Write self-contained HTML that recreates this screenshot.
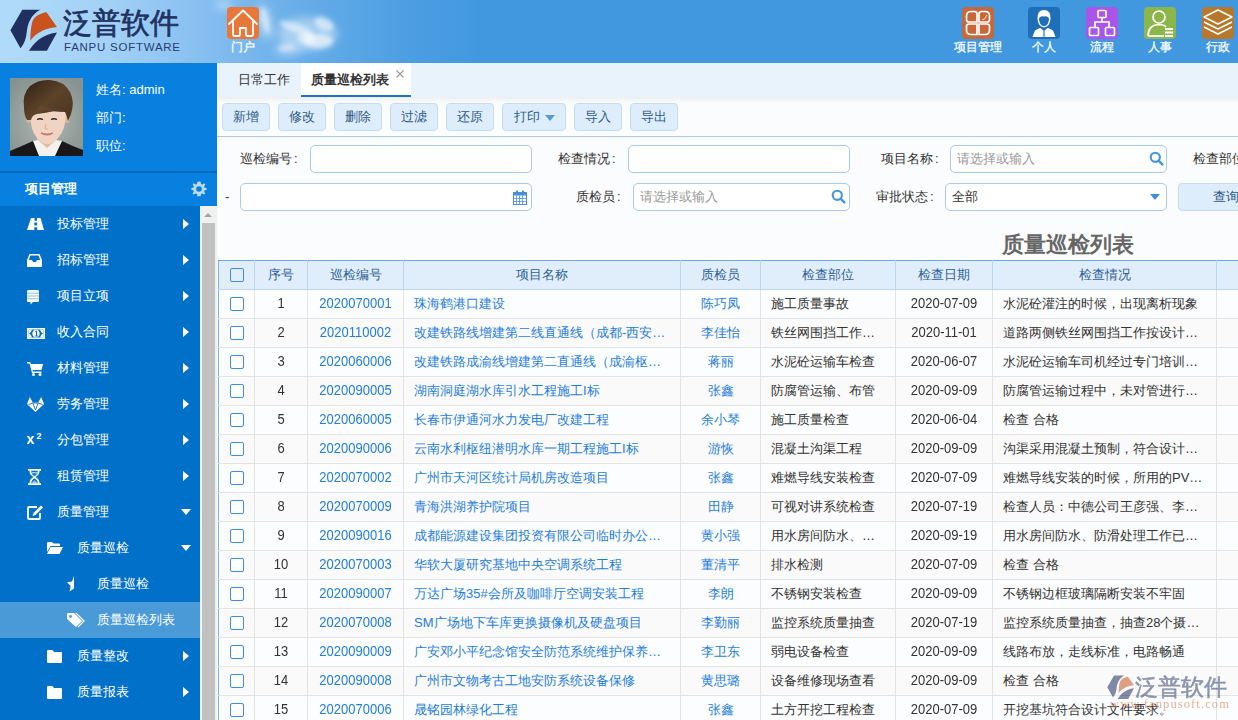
<!DOCTYPE html>
<html><head><meta charset="utf-8">
<style>
*{margin:0;padding:0;box-sizing:border-box}
html,body{width:1238px;height:720px;overflow:hidden;background:#fbfcfd;font-family:"Liberation Sans",sans-serif;font-size:13px;color:#333}
.a{position:absolute}
#hdr{position:absolute;left:0;top:0;width:1238px;height:63px;background:linear-gradient(90deg,#b1dbf9 0px,#a2d1f6 110px,#84bdf0 210px,#62aae7 320px,#4c9ee2 410px,#4298df 480px,#4298df 1238px);overflow:hidden}
.hico{position:absolute;top:7px;width:32px;height:32px;border-radius:4px}
.hlbl{position:absolute;top:38px;color:#fff;font-size:12px;line-height:18px;white-space:nowrap}
#side{position:absolute;left:0;top:63px;width:217px;height:657px;background:#0880e0}
#menu{position:absolute;left:0;top:206px;width:200px;height:514px;background:#0070c8}
.mi{position:absolute;left:0;width:200px;height:36px;color:#fff;font-size:13px;line-height:36px}
.mi .t{position:absolute;top:0;white-space:nowrap}
.mi .ic{position:absolute}
.ar{position:absolute;left:183px;top:13px;width:0;height:0;border-top:5px solid transparent;border-bottom:5px solid transparent;border-left:6px solid #fff}
.dn{position:absolute;left:181px;top:15px;width:0;height:0;border-left:5px solid transparent;border-right:5px solid transparent;border-top:6px solid #fff}
#sb{position:absolute;left:200px;top:206px;width:17px;height:514px;background:#f1f1f1}
#sbth{position:absolute;left:202px;top:223px;width:13px;height:497px;background:#c1c1c1}
#sbup{position:absolute;left:204px;top:213px;width:0;height:0;border-left:4px solid transparent;border-right:4px solid transparent;border-bottom:4px solid #a3a3a3}
#tabbar{position:absolute;left:217px;top:63px;width:1021px;height:34px;background:#e8f3fc}
#tabshadow{position:absolute;left:217px;top:97px;width:1021px;height:6px;background:linear-gradient(#eceeef,#fbfcfd)}
.tab{position:absolute;top:63px;height:34px;line-height:22px;padding-top:6px;font-size:13px;color:#333;white-space:nowrap}
.btn{position:absolute;top:103px;height:28px;background:#deedfb;border:1px solid #c6dcf0;border-radius:4px;color:#2f5a87;font-size:13px;line-height:26px;text-align:center;white-space:nowrap}
#tbline{position:absolute;left:217px;top:136px;width:1021px;height:1px;background:#a9c9e6}
.lbl{position:absolute;font-size:13px;color:#333;line-height:16px;white-space:nowrap}
.inp{position:absolute;height:28px;background:#fff;border:1px solid #a9c9e8;border-radius:5px}
.ph{position:absolute;left:6px;top:5px;color:#999;font-size:13px;line-height:16px;white-space:nowrap}
table{position:absolute;left:218px;top:260px;width:1029px;border-collapse:collapse;table-layout:fixed;font-size:13px}
td,th{height:29px;border:1px solid #e3e3e3;white-space:nowrap;overflow:hidden;padding:0 0 0 10px;font-weight:normal;color:#333}
th{background:#e0eefb;border-color:#bcd6ee;color:#2f6197;text-align:center;padding:0 0 1px 0}
td.c{text-align:center;padding:0}
td.l{color:#1f7ddd}
.cb{display:inline-block;width:14px;height:14px;border:1px solid #4f8fd3;border-radius:2px;background:#fff;vertical-align:middle}

.cb{position:relative;top:-1px}
i.n{font-style:normal;display:inline-block;line-height:16px;transform:scaleY(1.12);transform-origin:50% 75%}
th .cb{top:0;background:transparent}
th{border-top-color:#6aa6e2}
tr>*:first-child{border-left-color:#7ab2e6}
.cb{border-color:#3f8ddd}
tr:nth-child(even) td{background:#fcfdfe}
tr:nth-child(odd) td{background:#fafafa}

</style></head><body>
<div id="hdr">
<svg class="a" style="left:0;top:0" width="200" height="63" viewBox="0 0 200 63">
<path d="M22.3,9.7 L40.4,9.7 C34,13 28.5,19 27,30 C26,40 24,44 20.5,48.3 L10.4,30.3 Z" fill="#1f2f5f"/>
<path d="M46.5,12.2 L57,27 C48,27.5 36,32 30.3,40.7 C30.5,33 31,25 33,20 C36,15 42,13 46.5,12.2 Z" fill="#c9531f"/>
<path d="M57,32.4 L46.9,50.8 L28.8,50.8 C34,43 41,34.5 57,32.4 Z" fill="#1f2f5f"/>
</svg>
<div class="a" style="left:63px;top:4px;font-size:29px;-webkit-text-stroke:0.7px #1f3162;line-height:38px;color:#1f3162;white-space:nowrap;letter-spacing:0px">泛普软件</div>
<div class="a" style="left:64px;top:40px;font-size:11.5px;line-height:14px;color:#2a3d6e;white-space:nowrap;letter-spacing:0.75px">FANPU SOFTWARE</div>
<svg class="a" style="left:200px;top:0" width="160" height="63" viewBox="0 0 160 63">
<defs><filter id="bl" x="-50%" y="-50%" width="200%" height="200%"><feGaussianBlur stdDeviation="2"/></filter><filter id="bl2" x="-50%" y="-50%" width="200%" height="200%"><feGaussianBlur stdDeviation="4.5"/></filter></defs>
<g fill="#fff" filter="url(#bl2)">
<ellipse cx="24" cy="5" rx="9" ry="4" opacity="0.45"/>
<ellipse cx="65" cy="22" rx="7" ry="18" opacity="0.4" transform="rotate(-12 65 22)"/>
<ellipse cx="108" cy="34" rx="30" ry="17" opacity="0.4"/>
<ellipse cx="88" cy="50" rx="14" ry="6" opacity="0.35"/>
</g>
<g fill="#fff" filter="url(#bl)">
<ellipse cx="65" cy="20" rx="3.5" ry="13" opacity="0.45" transform="rotate(-12 65 20)"/>
<ellipse cx="96" cy="28" rx="18" ry="4.5" opacity="0.5" transform="rotate(20 96 28)"/>
<ellipse cx="124" cy="24" rx="10" ry="6" opacity="0.55" transform="rotate(25 124 24)"/>
<ellipse cx="118" cy="41" rx="15" ry="7" opacity="0.6"/>
<ellipse cx="106" cy="38" rx="9" ry="6" opacity="0.5"/>
<ellipse cx="86" cy="48" rx="8" ry="3.5" opacity="0.4"/>
</g>
</svg>
<div class="hico" style="left:227px;background:#e8783a"></div>
<svg class="a" style="left:227px;top:7px" width="32" height="32" viewBox="0 0 32 32" fill="none" stroke="#fff" stroke-width="1.8" stroke-linejoin="round" stroke-linecap="round">
<path d="M2,17 L16,3.5 L30,17"/>
<path d="M6,13.5 V27.5 Q6,29 7.5,29 H11.5 Q13,29 13,27.5 V21 H19 V27.5 Q19,29 20.5,29 H24.5 Q26,29 26,27.5 V13.5"/>
</svg>
<div class="hlbl" style="-webkit-text-stroke:0.25px #fff;left:231px">门户</div>
<div class="hico" style="left:962px;background:#c8673a"></div>
<svg class="a" style="left:962px;top:7px" width="32" height="32" viewBox="0 0 32 32" fill="none" stroke="#fff" stroke-width="1.7">
<path d="M9,4.5 H12.5 Q15,4.5 15,7 V15 H7 Q4.5,15 4.5,12.5 V9 Q4.5,4.5 9,4.5 Z"/>
<path d="M17,15 V7 Q17,4.5 19.5,4.5 H23 Q27.5,4.5 27.5,9 V12.5 Q27.5,15 25,15 Z"/>
<path d="M4.5,19.5 Q4.5,17 7,17 H15 V27.5 H9 Q4.5,27.5 4.5,23 Z"/>
<path d="M17,17 H25 Q27.5,17 27.5,19.5 V23 Q27.5,27.5 23,27.5 H17 Z"/>
<path d="M20,12.5 Q24,12.5 24.5,8" stroke-width="0.8"/>
</svg>
<div class="hlbl" style="-webkit-text-stroke:0.25px #fff;left:954px">项目管理</div>
<div class="hico" style="left:1028px;background:#1f6fb8"></div>
<svg class="a" style="left:1028px;top:7px" width="32" height="32" viewBox="0 0 32 32">
<path d="M9.5,12 Q9,3 16,3 Q23,3 22.5,12 Q22,19.5 16,20.5 Q10,19.5 9.5,12 Z" fill="#fff"/>
<path d="M11,11 Q13,8.5 16,9.5 Q19,8.5 21,11 Q21,18.5 16,19.3 Q11,18.5 11,11 Z" fill="#1f6fb8"/>
<path d="M4.5,30 L6.5,24.5 Q8,22 12.5,21 L15.3,23.5 L14.8,30 Z M27.5,30 L25.5,24.5 Q24,22 19.5,21 L16.7,23.5 L17.2,30 Z" fill="#fff"/>
<path d="M15.5,23.5 H16.5 L17,30 H15 Z" fill="#fff" opacity="0.5"/>
</svg>
<div class="hlbl" style="-webkit-text-stroke:0.25px #fff;left:1032px">个人</div>
<div class="hico" style="left:1086px;background:#a855e8"></div>
<svg class="a" style="left:1086px;top:7px" width="32" height="32" viewBox="0 0 32 32" fill="none" stroke="#fff" stroke-width="1.7">
<rect x="12" y="3.5" width="8" height="7" rx="1"/>
<path d="M16,10.5 V15 M9,20.5 V15 H23 V20.5"/>
<rect x="3.5" y="20.5" width="9" height="8" rx="1"/>
<rect x="19.5" y="20.5" width="9" height="8" rx="1"/>
</svg>
<div class="hlbl" style="-webkit-text-stroke:0.25px #fff;left:1090px">流程</div>
<div class="hico" style="left:1144px;background:#8ab64a"></div>
<svg class="a" style="left:1144px;top:7px" width="32" height="32" viewBox="0 0 32 32" fill="none" stroke="#fff" stroke-width="1.7">
<circle cx="15" cy="10" r="6"/>
<path d="M4,29 Q4,18 15,17.5 Q20,17.5 22,20"/>
<path d="M4,29 H20"/>
<path d="M21,22 H29 M21,25.5 H29 M21,29 H29" stroke-width="1.8"/>
</svg>
<div class="hlbl" style="-webkit-text-stroke:0.25px #fff;left:1148px">人事</div>
<div class="hico" style="left:1202px;background:#b8782c"></div>
<svg class="a" style="left:1202px;top:7px" width="32" height="32" viewBox="0 0 32 32" fill="none" stroke="#fff" stroke-width="1.5" stroke-linejoin="round">
<path d="M2,10 L16,3 L30,10 L16,17 Z"/>
<path d="M2,15 L16,22 L30,15"/>
<path d="M2,20 L16,27 L30,20"/>
</svg>
<div class="hlbl" style="-webkit-text-stroke:0.25px #fff;left:1206px">行政</div>

</div>
<div id="side"></div>
<svg class="a" style="left:10px;top:78px" width="73" height="78" viewBox="0 0 73 78">
<defs>
<radialGradient id="pbg" cx="50%" cy="55%" r="65%"><stop offset="0" stop-color="#b0b9b6"/><stop offset="1" stop-color="#86928f"/></radialGradient>
<linearGradient id="hair" x1="0" y1="0" x2="1" y2="1"><stop offset="0" stop-color="#2e2216"/><stop offset="0.5" stop-color="#5c4229"/><stop offset="1" stop-color="#4a3520"/></linearGradient>
</defs>
<rect width="73" height="78" fill="url(#pbg)"/>
<path d="M27,58 L47,58 L47,70 L27,70 Z" fill="#e2bba5"/>
<path d="M0,78 L0,73 Q12,68 23,63 L36,76 L52,63 Q62,68 73,72 L73,78 Z" fill="#1a1718"/>
<path d="M23,63 L29,78 L45,78 L52,63 L46,62 L37,70 L28,62 Z" fill="#f4f1ee"/>
<ellipse cx="18.5" cy="41" rx="2.5" ry="4" fill="#deb49c"/>
<ellipse cx="57" cy="41" rx="2.5" ry="4" fill="#deb49c"/>
<path d="M20,34 Q20,52 27,60 Q32,66 37,66 Q43,66 48,60 Q56,52 56,34 Z" fill="#f0d3c0"/>
<path d="M14,30 Q12,16 20,8 Q29,1 40,2 Q54,3 60,14 Q65,24 61,36 L58,43 Q57,38 55,34 Q50,34 44,33 Q36,35 27,36 Q22,37 21,42 L17,42 Q14,37 14,30 Z" fill="url(#hair)"/>
<path d="M25,36 Q33,30 44,33 Q37,28 30,28 Z" fill="#6a4c30" opacity="0.6"/>
<path d="M27,41.5 Q30,40 33,41.5" stroke="#2a2828" stroke-width="1.3" fill="none"/>
<path d="M41,41.5 Q44,40 47,41.5" stroke="#2a2828" stroke-width="1.3" fill="none"/>
<path d="M36,46 L35,51 L38,51" stroke="#d4a890" stroke-width="0.8" fill="none"/>
<path d="M31,55 Q37,59 43,55 Q37,57 31,55 Z" fill="#b86a68" stroke="#c47a72" stroke-width="1.2"/>
</svg>
<div class="a" style="left:96px;top:82px;color:#fff;font-size:13px;line-height:16px">姓名: admin</div>
<div class="a" style="left:96px;top:110px;color:#fff;font-size:13px;line-height:16px">部门:</div>
<div class="a" style="left:96px;top:137.5px;color:#fff;font-size:13px;line-height:16px">职位:</div>
<div class="a" style="left:0;top:171px;width:217px;height:2px;background:#0668b8"></div>
<div class="a" style="left:25px;top:181px;color:#fff;font-size:13px;font-weight:bold;line-height:16px">项目管理</div>
<svg class="a" style="left:191px;top:181px" width="16" height="16" viewBox="0 0 16 16">
<g fill="#b9d9f6">
<path d="M8,0.5 L9.6,0.7 L10,2.9 L11.4,3.5 L13.2,2.2 L14.3,3.6 L13.1,5.4 L13.6,6.7 L15.6,7.1 L15.6,8.9 L13.6,9.3 L13.1,10.6 L14.3,12.4 L13,13.6 L11.3,12.4 L10,13 L9.6,15.3 L6.4,15.3 L6,13 L4.6,12.4 L2.8,13.6 L1.6,12.4 L2.8,10.6 L2.3,9.3 L0.4,8.9 L0.4,7.1 L2.3,6.7 L2.8,5.4 L1.7,3.6 L2.8,2.3 L4.6,3.5 L6,2.9 L6.4,0.7 Z"/>
</g>
<circle cx="8" cy="8" r="2.8" fill="#0880e0"/>
</svg>
<div id="menu"></div>
<div class="mi" style="top:206px"><svg class="ic" style="left:27px;top:12px" width="17" height="12" viewBox="0 0 17 12"><path d="M4,0 H13.6 L17,12 H0 Z" fill="#fff"/><path d="M7.5,0 H10 V2.8 H7.5 Z M7.4,4.4 H10.1 V7.5 H7.4 Z M7.3,9.2 H10.2 V12 H7.3 Z" fill="#0070c8"/></svg><span class="t" style="left:57px">投标管理</span><span class="ar"></span></div>
<div class="mi" style="top:242px"><svg class="ic" style="left:27px;top:12px" width="15" height="13" viewBox="0 0 15 13"><path d="M2.5,0 H12.5 L15,6 V13 H0 V6 Z M3.5,1.5 L1.8,6 H5 L6,8 H9 L10,6 H13.2 L11.5,1.5 Z" fill="#fff" fill-rule="evenodd"/></svg><span class="t" style="left:57px">招标管理</span><span class="ar"></span></div>
<div class="mi" style="top:278px"><svg class="ic" style="left:27px;top:12px" width="12" height="15" viewBox="0 0 12 15"><path d="M1.5,0 H10.5 Q12,0 12,1.5 V10.5 Q12,12 10.5,12 H6 L3.5,14.5 L3.5,12 H1.5 Q0,12 0,10.5 V1.5 Q0,0 1.5,0 Z" fill="#fff"/><path d="M0,3.2 H12 M0,6 H12 M0,8.8 H12" stroke="#7fb4e6" stroke-width="0.9"/></svg><span class="t" style="left:57px">项目立项</span><span class="ar"></span></div>
<div class="mi" style="top:314px"><svg class="ic" style="left:27px;top:14px" width="18" height="11" viewBox="0 0 18 11"><path d="M0,0 H18 V11 H0 Z M1.5,1.5 V9.5 H16.5 V1.5 Z" fill="#fff" fill-rule="evenodd"/><path d="M1.5,1.5 H5 Q3.5,5.5 1.5,5.5 Z M16.5,1.5 H13 Q14.5,5.5 16.5,5.5 Z M1.5,9.5 H5 Q3.5,5.5 1.5,5.5 Z M16.5,9.5 H13 Q14.5,5.5 16.5,5.5 Z" fill="#fff"/><ellipse cx="9" cy="5.5" rx="3.6" ry="3.8" fill="#fff"/><path d="M8.3,3.6 L9.5,3 V8 M8.2,8 H10.8" stroke="#0070c8" stroke-width="1" fill="none"/></svg><span class="t" style="left:57px">收入合同</span><span class="ar"></span></div>
<div class="mi" style="top:350px"><svg class="ic" style="left:27px;top:12px" width="16" height="14" viewBox="0 0 16 14"><path d="M0,0 H3 L4,2 H16 L14.5,8 H5.5 L6,9.5 H14.5 V11 H5 L2.5,1.5 H0 Z" fill="#fff"/><circle cx="6.5" cy="12.5" r="1.5" fill="#fff"/><circle cx="13" cy="12.5" r="1.5" fill="#fff"/></svg><span class="t" style="left:57px">材料管理</span><span class="ar"></span></div>
<div class="mi" style="top:386px"><svg class="ic" style="left:27px;top:11px" width="17" height="15" viewBox="0 0 17 15"><path d="M0,7 L2.8,0 L5.8,5.5 H11.2 L14.2,0 L17,7 L8.5,15 Z" fill="#fff"/><path d="M1.5,7.5 L5.8,6 L8.5,13 M15.5,7.5 L11.2,6 L8.5,13 M5.8,6 H11.2" stroke="#0070c8" stroke-width="0.9" fill="none"/></svg><span class="t" style="left:57px">劳务管理</span><span class="ar"></span></div>
<div class="mi" style="top:422px"><svg class="ic" style="left:27px;top:9px" width="18" height="15" viewBox="0 0 18 15"><text x="-0.5" y="13" font-family="Liberation Sans" font-weight="bold" font-size="14" fill="#fff">x</text><text x="9.5" y="8" font-family="Liberation Sans" font-weight="bold" font-size="9" fill="#fff">2</text></svg><span class="t" style="left:57px">分包管理</span><span class="ar"></span></div>
<div class="mi" style="top:458px"><svg class="ic" style="left:28px;top:11px" width="13" height="16" viewBox="0 0 13 16"><path d="M0,0 H13 V1.8 H11.5 Q11.5,6 7.5,8 Q11.5,10 11.5,14.2 H13 V16 H0 V14.2 H1.5 Q1.5,10 5.5,8 Q1.5,6 1.5,1.8 H0 Z M3.2,1.8 Q3.2,5.8 6.5,7 Q9.8,5.8 9.8,1.8 Z M3.2,14.2 Q3.4,10.8 6.5,9.2 Q9.6,10.8 9.8,14.2 Z" fill="#fff" fill-rule="evenodd"/><path d="M3.5,3 H9.5 L9,4.5 H4 Z M3.8,14.2 Q4.5,12 6.5,11.2 Q8.5,12 9.2,14.2 Z" fill="#fff" opacity="0.6"/></svg><span class="t" style="left:57px">租赁管理</span><span class="ar"></span></div>
<div class="mi" style="top:494px"><svg class="ic" style="left:27px;top:11px" width="16" height="15" viewBox="0 0 16 15"><path d="M10,2 H2 Q1,2 1,3 V13 Q1,14 2,14 H12 Q13,14 13,13 V8" fill="none" stroke="#fff" stroke-width="1.8"/><path d="M14,0.5 L16,2.5 L8.5,10 L5.5,11 L6.5,8 Z" fill="#fff"/></svg><span class="t" style="left:57px">质量管理</span><span class="dn"></span></div>
<div class="mi" style="top:530px"><svg class="ic" style="left:47px;top:12px" width="16" height="12" viewBox="0 0 16 12"><path d="M0,1 Q0,0 1,0 H5 L6.5,1.5 H12 Q13,1.5 13,2.5 V4 H3.5 L0,10 Z" fill="#fff"/><path d="M3.5,5 H16 L12.5,12 H0 Z" fill="#fff"/></svg><span class="t" style="left:77px">质量巡检</span><span class="dn"></span></div>
<div class="mi" style="top:566px"><svg class="ic" style="left:67px;top:10px" width="9" height="16" viewBox="0 0 9 16"><path d="M7,0 V12.5 L2.5,15.5 L3.6,10 L0,6.3 L5,5.5 Z" fill="#fff"/></svg><span class="t" style="left:97px">质量巡检</span></div>
<div class="mi" style="top:602px;background:#4a9ad8"><svg class="ic" style="left:67px;top:11px" width="18" height="15" viewBox="0 0 18 15"><path d="M0,1 Q0,0 1,0 H7 L15,8 L9,14 L0,6 Z" fill="#fff"/><circle cx="3.5" cy="3.5" r="1.4" fill="#4a9ad8"/><path d="M9,0 L17,8 L11,14" fill="none" stroke="#fff" stroke-width="1.2"/></svg><span class="t" style="left:97px">质量巡检列表</span></div>
<div class="mi" style="top:638px"><svg class="ic" style="left:47px;top:12px" width="15" height="13" viewBox="0 0 15 13"><path d="M0,1 Q0,0 1,0 H5.5 L7,2 H14 Q15,2 15,3 V12 Q15,13 14,13 H1 Q0,13 0,12 Z" fill="#fff"/></svg><span class="t" style="left:77px">质量整改</span><span class="ar"></span></div>
<div class="mi" style="top:674px"><svg class="ic" style="left:47px;top:12px" width="15" height="13" viewBox="0 0 15 13"><path d="M0,1 Q0,0 1,0 H5.5 L7,2 H14 Q15,2 15,3 V12 Q15,13 14,13 H1 Q0,13 0,12 Z" fill="#fff"/></svg><span class="t" style="left:77px">质量报表</span><span class="ar"></span></div>
<div id="sb"></div><div id="sbth"></div><div id="sbup"></div>

<div id="tabbar"></div>
<div id="tabshadow"></div>
<div class="tab" style="left:238px">日常工作</div>
<div class="a" style="left:301px;top:63px;width:110px;height:34px;background:#fff;border-bottom:2px solid #1a73c8"></div>
<div class="tab" style="left:311px;font-weight:bold">质量巡检列表</div>
<svg class="a" style="left:395px;top:69px" width="10" height="10" viewBox="0 0 10 10"><path d="M1.5,1.5 L8.5,8.5 M8.5,1.5 L1.5,8.5" stroke="#9a9a9a" stroke-width="1.1"/></svg>
<div class="btn" style="left:222px;width:48px">新增</div>
<div class="btn" style="left:278px;width:48px">修改</div>
<div class="btn" style="left:334px;width:48px">删除</div>
<div class="btn" style="left:390px;width:48px">过滤</div>
<div class="btn" style="left:446px;width:48px">还原</div>
<div class="btn" style="left:502px;width:64px;text-align:left;padding-left:11px">打印<span class="a" style="left:42px;top:11px;width:0;height:0;border-left:5px solid transparent;border-right:5px solid transparent;border-top:6px solid #5b9bd5"></span></div>
<div class="btn" style="left:574px;width:48px">导入</div>
<div class="btn" style="left:630px;width:48px">导出</div>
<div id="tbline"></div>
<div class="lbl" style="left:240px;top:151px">巡检编号<span style="margin-left:2px">:</span></div>
<div class="inp" style="left:310px;top:145px;width:222px"></div>
<div class="lbl" style="left:558px;top:151px">检查情况<span style="margin-left:2px">:</span></div>
<div class="inp" style="left:628px;top:145px;width:222px"></div>
<div class="lbl" style="left:881px;top:151px">项目名称<span style="margin-left:2px">:</span></div>
<div class="inp" style="left:950px;top:145px;width:217px"><span class="ph">请选择或输入</span></div>
<div class="lbl" style="left:1193px;top:151px">检查部位<span style="margin-left:2px">:</span></div>
<div class="lbl" style="left:225px;top:189px">-</div>
<div class="inp" style="left:240px;top:183px;width:292px"></div>
<div class="lbl" style="left:576px;top:189px">质检员<span style="margin-left:2px">:</span></div>
<div class="inp" style="left:633px;top:183px;width:217px"><span class="ph">请选择或输入</span></div>
<div class="lbl" style="left:876px;top:189px">审批状态<span style="margin-left:2px">:</span></div>
<div class="inp" style="left:945px;top:183px;width:222px"><span class="ph" style="color:#333">全部</span></div>
<div class="btn" style="left:1178px;top:183px;width:80px;text-align:left;padding-left:34px">查询</div>
<div class="a" style="left:1002px;top:232px;font-size:22px;font-weight:bold;color:#666;line-height:26px;white-space:nowrap">质量巡检列表</div>
<svg class="a" style="left:513px;top:190px" width="14" height="15" viewBox="0 0 14 15"><rect x="0.5" y="2.5" width="13" height="12" fill="none" stroke="#4a90d9" stroke-width="1"/><rect x="0.5" y="2.5" width="13" height="3" fill="#4a90d9"/><path d="M0.5,8.5 H13.5 M0.5,11.5 H13.5 M3.5,5.5 V14.5 M6.5,5.5 V14.5 M9.5,5.5 V14.5" stroke="#4a90d9" stroke-width="0.8"/><rect x="3" y="0.5" width="2" height="3" fill="#4a90d9"/><rect x="9" y="0.5" width="2" height="3" fill="#4a90d9"/></svg>
<svg class="a" style="left:831px;top:189px" width="15" height="15" viewBox="0 0 15 15"><circle cx="6.3" cy="6.3" r="4.6" fill="none" stroke="#4596df" stroke-width="2.1"/><path d="M9.6,9.6 L13.3,13.3" stroke="#4596df" stroke-width="2.5" stroke-linecap="round"/></svg>
<svg class="a" style="left:1149px;top:151px" width="15" height="15" viewBox="0 0 15 15"><circle cx="6.3" cy="6.3" r="4.6" fill="none" stroke="#4596df" stroke-width="2.1"/><path d="M9.6,9.6 L13.3,13.3" stroke="#4596df" stroke-width="2.5" stroke-linecap="round"/></svg>
<span class="a" style="left:1150px;top:194px;width:0;height:0;border-left:5.5px solid transparent;border-right:5.5px solid transparent;border-top:6px solid #3d8fe0"></span>

<table><colgroup><col style="width:36px"><col style="width:53px"><col style="width:96px"><col style="width:277px"><col style="width:80px"><col style="width:135px"><col style="width:97px"><col style="width:224px"><col style="width:30px"></colgroup><tr><th><span class="cb"></span></th><th>序号</th><th>巡检编号</th><th>项目名称</th><th>质检员</th><th>检查部位</th><th>检查日期</th><th>检查情况</th><th></th></tr><tr><td class="c"><span class="cb"></span></td><td class="c"><i class="n">1</i></td><td class="c l"><i class="n">2020070001</i></td><td class="l">珠海鹤港口建设</td><td class="c l">陈巧凤</td><td>施工质量事故</td><td class="c"><i class="n">2020-07-09</i></td><td>水泥砼灌注的时候，出现离析现象</td><td></td></tr><tr><td class="c"><span class="cb"></span></td><td class="c"><i class="n">2</i></td><td class="c l"><i class="n">2020110002</i></td><td class="l">改建铁路线增建第二线直通线（成都-西安…</td><td class="c l">李佳怡</td><td>铁丝网围挡工作…</td><td class="c"><i class="n">2020-11-01</i></td><td>道路两侧铁丝网围挡工作按设计…</td><td></td></tr><tr><td class="c"><span class="cb"></span></td><td class="c"><i class="n">3</i></td><td class="c l"><i class="n">2020060006</i></td><td class="l">改建铁路成渝线增建第二直通线（成渝枢…</td><td class="c l">蒋丽</td><td>水泥砼运输车检查</td><td class="c"><i class="n">2020-06-07</i></td><td>水泥砼运输车司机经过专门培训…</td><td></td></tr><tr><td class="c"><span class="cb"></span></td><td class="c"><i class="n">4</i></td><td class="c l"><i class="n">2020090005</i></td><td class="l">湖南洞庭湖水库引水工程施工I标</td><td class="c l">张鑫</td><td>防腐管运输、布管</td><td class="c"><i class="n">2020-09-09</i></td><td>防腐管运输过程中，未对管进行…</td><td></td></tr><tr><td class="c"><span class="cb"></span></td><td class="c"><i class="n">5</i></td><td class="c l"><i class="n">2020060005</i></td><td class="l">长春市伊通河水力发电厂改建工程</td><td class="c l">余小琴</td><td>施工质量检查</td><td class="c"><i class="n">2020-06-04</i></td><td>检查 合格</td><td></td></tr><tr><td class="c"><span class="cb"></span></td><td class="c"><i class="n">6</i></td><td class="c l"><i class="n">2020090006</i></td><td class="l">云南水利枢纽潜明水库一期工程施工I标</td><td class="c l">游恢</td><td>混凝土沟渠工程</td><td class="c"><i class="n">2020-09-09</i></td><td>沟渠采用混凝土预制，符合设计…</td><td></td></tr><tr><td class="c"><span class="cb"></span></td><td class="c"><i class="n">7</i></td><td class="c l"><i class="n">2020070002</i></td><td class="l">广州市天河区统计局机房改造项目</td><td class="c l">张鑫</td><td>难燃导线安装检查</td><td class="c"><i class="n">2020-07-09</i></td><td>难燃导线安装的时候，所用的PV…</td><td></td></tr><tr><td class="c"><span class="cb"></span></td><td class="c"><i class="n">8</i></td><td class="c l"><i class="n">2020070009</i></td><td class="l">青海洪湖养护院项目</td><td class="c l">田静</td><td>可视对讲系统检查</td><td class="c"><i class="n">2020-07-19</i></td><td>检查人员：中德公司王彦强、李…</td><td></td></tr><tr><td class="c"><span class="cb"></span></td><td class="c"><i class="n">9</i></td><td class="c l"><i class="n">2020090016</i></td><td class="l">成都能源建设集团投资有限公司临时办公…</td><td class="c l">黄小强</td><td>用水房间防水、…</td><td class="c"><i class="n">2020-09-19</i></td><td>用水房间防水、防滑处理工作已…</td><td></td></tr><tr><td class="c"><span class="cb"></span></td><td class="c"><i class="n">10</i></td><td class="c l"><i class="n">2020070003</i></td><td class="l">华软大厦研究基地中央空调系统工程</td><td class="c l">董清平</td><td>排水检测</td><td class="c"><i class="n">2020-07-09</i></td><td>检查 合格</td><td></td></tr><tr><td class="c"><span class="cb"></span></td><td class="c"><i class="n">11</i></td><td class="c l"><i class="n">2020090007</i></td><td class="l">万达广场35#会所及咖啡厅空调安装工程</td><td class="c l">李朗</td><td>不锈钢安装检查</td><td class="c"><i class="n">2020-09-09</i></td><td>不锈钢边框玻璃隔断安装不牢固</td><td></td></tr><tr><td class="c"><span class="cb"></span></td><td class="c"><i class="n">12</i></td><td class="c l"><i class="n">2020070008</i></td><td class="l">SM广场地下车库更换摄像机及硬盘项目</td><td class="c l">李勤丽</td><td>监控系统质量抽查</td><td class="c"><i class="n">2020-07-19</i></td><td>监控系统质量抽查，抽查28个摄…</td><td></td></tr><tr><td class="c"><span class="cb"></span></td><td class="c"><i class="n">13</i></td><td class="c l"><i class="n">2020090009</i></td><td class="l">广安邓小平纪念馆安全防范系统维护保养…</td><td class="c l">李卫东</td><td>弱电设备检查</td><td class="c"><i class="n">2020-09-09</i></td><td>线路布放，走线标准，电路畅通</td><td></td></tr><tr><td class="c"><span class="cb"></span></td><td class="c"><i class="n">14</i></td><td class="c l"><i class="n">2020090008</i></td><td class="l">广州市文物考古工地安防系统设备保修</td><td class="c l">黄思璐</td><td>设备维修现场查看</td><td class="c"><i class="n">2020-09-09</i></td><td>检查 合格</td><td></td></tr><tr><td class="c"><span class="cb"></span></td><td class="c"><i class="n">15</i></td><td class="c l"><i class="n">2020070006</i></td><td class="l">晟铭园林绿化工程</td><td class="c l">张鑫</td><td>土方开挖工程检查</td><td class="c"><i class="n">2020-07-09</i></td><td>开挖基坑符合设计文件要求。</td><td></td></tr></table>
<svg class="a" style="left:1107px;top:675px" width="27" height="24" viewBox="0 0 47 42" preserveAspectRatio="none" opacity="0.55">
<path d="M12.3,0.7 L30.4,0.7 C24,4 18.5,10 17,21 C16,31 14,35 10.5,39.3 L0.4,21.3 Z" fill="#1f2f5f"/>
<path d="M36.5,3.2 L47,18 C38,18.5 26,23 20.3,31.7 C20.5,24 21,16 23,11 C26,6 32,4 36.5,3.2 Z" fill="#c9531f"/>
<path d="M47,23.4 L36.9,41.8 L18.8,41.8 C24,34 31,25.5 47,23.4 Z" fill="#1f2f5f"/>
</svg>
<div class="a" style="left:1135px;top:671px;font-size:23px;-webkit-text-stroke:0.6px #1f3162;line-height:32px;color:#1f3162;opacity:0.5;white-space:nowrap">泛普软件</div>
<div class="a" style="left:1110px;top:697px;font-family:'Liberation Serif',serif;font-size:12.5px;line-height:14px;color:#d87a50;opacity:0.6;white-space:nowrap;letter-spacing:1.1px">www.fanpusoft.com</div>

</body></html>
